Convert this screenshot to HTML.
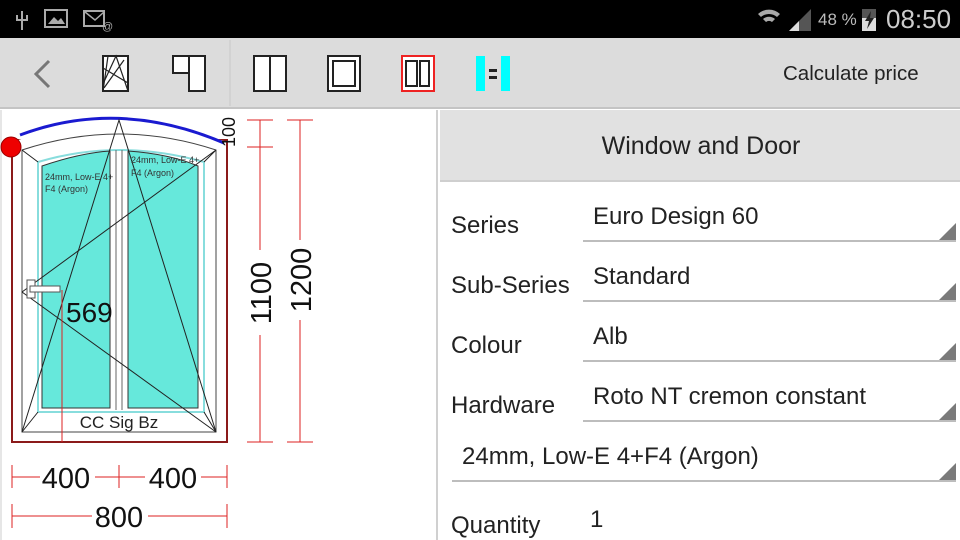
<!DOCTYPE html>
<html><head><meta charset="utf-8"><style>
*{margin:0;padding:0;box-sizing:border-box}
body{width:960px;height:540px;overflow:hidden;background:#fff;font-family:"Liberation Sans",sans-serif;position:relative}
.sb{position:absolute;left:0;top:0;width:960px;height:38px;background:#000}
.tb{position:absolute;left:0;top:38px;width:960px;height:71px;background:#dcdcdc;border-bottom:2px solid #c4c4c4}
.abs{position:absolute}
.rp{position:absolute;left:436px;top:110px;width:524px;height:430px;border-left:2px solid #d0d0d0}
.hd{position:absolute;left:2px;top:0;width:522px;height:72px;background:#e1e1e1;border-bottom:2px solid #cfcfcf;font-size:25px;color:#222;text-align:center;line-height:72px}
.lb{position:absolute;left:13px;font-size:24px;color:#222}
.sp{position:absolute;left:145px;width:373px;height:30px;border-bottom:2px solid #bdbdbd;font-size:24px;color:#222;padding-left:10px}
.tri{position:absolute;right:0;bottom:0;width:0;height:0;border-left:17px solid transparent;border-bottom:17px solid #7a7a7a}
</style></head><body>
<div class="sb">
<svg class="abs" style="left:14px;top:8px" width="110" height="24">
<g fill="#aaa" stroke="#aaa">
<line x1="8" y1="3" x2="8" y2="22" stroke-width="2"/><path d="M3 7v5h10V7" fill="none" stroke-width="2"/>
<rect x="31" y="2" width="22" height="17" fill="none" stroke-width="2"/><path d="M34 16l6-7 4 4 3-3 4 6z" stroke="none"/>
<rect x="70" y="3" width="20" height="15" fill="none" stroke-width="2"/><path d="M71 4l10 8 9-8" fill="none" stroke-width="1.5"/>
</g><text x="88" y="22" font-size="11" fill="#aaa">@</text></svg>
<svg class="abs" style="left:756px;top:4px" width="60" height="30">
<path d="M2 10a16 16 0 0 1 22 0l-3 3a12 12 0 0 0-16 0z M7 15a9 9 0 0 1 12 0l-3 3a5 5 0 0 0-6 0z" fill="#aaa"/>
<path d="M33 27L55 5v22z" fill="#555"/><path d="M33 27l10-10v10z" fill="#ddd"/></svg>
<div class="abs" style="left:818px;top:10px;color:#bbb;font-size:17px">48 %</div>
<svg class="abs" style="left:860px;top:6px" width="18" height="26"><rect x="2" y="3" width="14" height="22" fill="#ddd"/><rect x="2" y="3" width="14" height="9" fill="#555"/><path d="M11 5l-6 10h4l-2 8 7-11h-4z" fill="#222"/></svg>
<div class="abs" style="left:886px;top:4px;color:#ccc;font-size:26px">08:50</div>
</div>
<div class="tb">
<svg class="abs" style="left:0;top:0" width="600" height="70">
<path d="M49 23l-13 13 13 13" fill="none" stroke="#777" stroke-width="3"/>
<g fill="#fff" stroke="#222" stroke-width="2">
<rect x="103" y="18" width="25" height="35"/>
<path d="M103 46l13-28 12 35M103 30l25 15M108 18l-5 35M124 22l-20 28" fill="none" stroke-width="1.2"/>
<rect x="173" y="18" width="16" height="17"/><rect x="189" y="18" width="16" height="35"/>
<rect x="254" y="18" width="32" height="35"/><line x1="270" y1="18" x2="270" y2="53"/>
<rect x="328" y="18" width="32" height="35"/><rect x="333" y="23" width="22" height="25"/>
<rect x="402" y="18" width="32" height="35" stroke="#e22"/><rect x="406" y="23" width="11" height="25"/><rect x="420" y="23" width="9" height="25"/>
</g>
<rect x="476" y="18" width="9" height="35" fill="#0ff"/><rect x="501" y="18" width="9" height="35" fill="#0ff"/>
<rect x="489" y="31" width="8" height="3" fill="#222"/><rect x="489" y="38" width="8" height="3" fill="#222"/>
<line x1="230" y1="2" x2="230" y2="68" stroke="#c8c8c8"/>
</svg>
<div class="abs" style="left:783px;top:24px;font-size:20.5px;color:#222">Calculate price</div>
</div>

<svg class="abs" style="left:0;top:110px" width="436" height="430" font-family="Liberation Sans">
<line x1="1" y1="0" x2="1" y2="430" stroke="#ccc"/>
<rect x="12" y="30" width="215" height="302" fill="#fff" stroke="#8b1a1a" stroke-width="2"/>
<path d="M12 32Q119 -5 227 32" fill="#fff" stroke="none"/>
<path d="M20 25Q119 -12 224 33" fill="none" stroke="#1a1ad0" stroke-width="3"/>
<path d="M22 40Q119 8 216 40L216 322L22 322Z" fill="#fff" stroke="#444"/>
<path d="M38 52Q119 28 204 52L204 302L38 302Z" fill="#fff" stroke="#8dd" stroke-width="2"/>
<path d="M42 56Q80 43 110 41L110 298L42 298Z" fill="#66e8db" stroke="#333" stroke-width="1"/>
<path d="M128 41Q170 44 198 56L198 298L128 298Z" fill="#66e8db" stroke="#333" stroke-width="1"/>
<line x1="116" y1="40" x2="116" y2="300" stroke="#666"/><line x1="122" y1="40" x2="122" y2="300" stroke="#666"/>
<g stroke="#222" stroke-width="1" fill="none">
<path d="M22 322L119 10L216 322"/><path d="M22 182L216 40M22 182L216 322"/>
<path d="M22 322L38 302M216 322L204 302M22 40L38 52M216 40L204 52"/>
</g>
<rect x="27" y="170" width="8" height="18" fill="#fff" stroke="#555"/><rect x="30" y="176" width="30" height="6" fill="#fff" stroke="#555"/>
<line x1="62" y1="180" x2="62" y2="332" stroke="#d22"/>
<circle cx="11" cy="37" r="10" fill="#e00" stroke="#900"/>
<text x="45" y="70" font-size="9" fill="#333">24mm, Low-E 4+</text><text x="45" y="82" font-size="9" fill="#333">F4 (Argon)</text>
<text x="131" y="53" font-size="9" fill="#333">24mm, Low-E 4+</text><text x="131" y="66" font-size="9" fill="#333">F4 (Argon)</text>
<text x="66" y="212" font-size="28" fill="#111">569</text>
<text x="119" y="318" font-size="17" fill="#222" text-anchor="middle">CC Sig Bz</text>
<g stroke="#d22" stroke-width="1">
<line x1="247" y1="10" x2="273" y2="10"/><line x1="247" y1="37" x2="273" y2="37"/><line x1="247" y1="332" x2="273" y2="332"/>
<line x1="287" y1="10" x2="313" y2="10"/><line x1="287" y1="332" x2="313" y2="332"/>
<line x1="260" y1="10" x2="260" y2="140"/><line x1="260" y1="225" x2="260" y2="332"/>
<line x1="300" y1="10" x2="300" y2="130"/><line x1="300" y1="210" x2="300" y2="332"/>
<line x1="12" y1="367" x2="40" y2="367"/><line x1="95" y1="367" x2="145" y2="367"/><line x1="201" y1="367" x2="227" y2="367"/>
<line x1="12" y1="406" x2="92" y2="406"/><line x1="148" y1="406" x2="227" y2="406"/>
<line x1="12" y1="355" x2="12" y2="378"/><line x1="119" y1="355" x2="119" y2="378"/><line x1="227" y1="355" x2="227" y2="378"/>
<line x1="12" y1="394" x2="12" y2="418"/><line x1="227" y1="394" x2="227" y2="418"/>
</g>
<text transform="translate(271,183) rotate(-90)" font-size="29" fill="#111" text-anchor="middle">1100</text>
<text transform="translate(311,170) rotate(-90)" font-size="29" fill="#111" text-anchor="middle">1200</text>
<text transform="translate(235,22) rotate(-90)" font-size="18" fill="#111" text-anchor="middle">100</text>
<text x="66" y="378" font-size="29" fill="#111" text-anchor="middle">400</text>
<text x="173" y="378" font-size="29" fill="#111" text-anchor="middle">400</text>
<text x="119" y="417" font-size="29" fill="#111" text-anchor="middle">800</text>
</svg>

<div class="rp">
<div class="hd">Window and Door</div>
<div class="lb" style="top:102px">Series</div><div class="sp" style="top:93px;height:39px">Euro Design 60<div class="tri"></div></div>
<div class="lb" style="top:162px">Sub-Series</div><div class="sp" style="top:153px;height:39px">Standard<div class="tri"></div></div>
<div class="lb" style="top:222px">Colour</div><div class="sp" style="top:213px;height:39px">Alb<div class="tri"></div></div>
<div class="lb" style="top:282px">Hardware</div><div class="sp" style="top:273px;height:39px">Roto NT cremon constant<div class="tri"></div></div>
<div class="sp" style="left:14px;width:504px;top:333px;height:39px">24mm, Low-E 4+F4 (Argon)<div class="tri"></div></div>
<div class="lb" style="top:402px">Quantity</div><div class="abs" style="left:152px;top:396px;font-size:24px;color:#222">1</div>
</div>
</body></html>
